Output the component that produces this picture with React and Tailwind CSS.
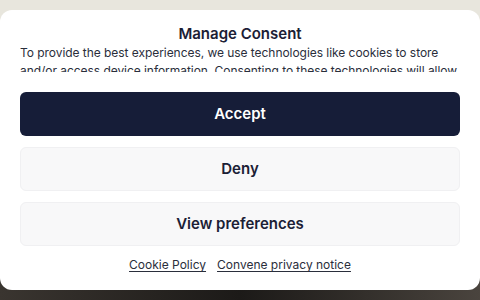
import React from 'react';

const App = () => {
  return (
    <div className="relative w-[480px] h-[300px] overflow-hidden" style={{ fontFamily: 'Inter, "Liberation Sans", sans-serif' }}>
      {/* page behind the dialog */}
      <div className="h-[150px] bg-[#e8e6dd]" />
      <div className="h-[150px] bg-gradient-to-r from-[#3a3530] via-[#1c1a18] to-[#4a443e]" />

      {/* Consent dialog */}
      <div className="absolute inset-x-0 top-[10px] h-[280px] bg-white rounded-xl flex flex-col items-center px-5 pt-[14px]">
        <h2 className="text-[15px] leading-5 font-semibold text-[#1b2035]">Manage Consent</h2>
        <div className="h-[28px] overflow-hidden w-full">
          <p className="text-[12px] leading-[18px] text-[#2a2e3b] tracking-[-0.05px]">
            To provide the best experiences, we use technologies like cookies to store and/or access device information. Consenting to these technologies will allow us to process data such as browsing behaviour or unique IDs on this site.
          </p>
        </div>

        <div className="w-full flex flex-col gap-[11px] mt-5">
          <button className="h-11 w-full rounded-md bg-[#161d38] text-white text-[15px] font-semibold">
            Accept
          </button>
          <button className="h-11 w-full rounded-md bg-[#f8f8f9] border border-[#f0f0f2] text-[#1b2035] text-[15px] font-semibold">
            Deny
          </button>
          <button className="h-11 w-full rounded-md bg-[#f8f8f9] border border-[#f0f0f2] text-[#1b2035] text-[15px] font-semibold">
            View preferences
          </button>
        </div>

        <div className="flex gap-[11px] mt-[9px] text-[12px] leading-5 text-[#2a2e3b]">
          <a className="underline underline-offset-2">Cookie Policy</a>
          <a className="underline underline-offset-2">Convene privacy notice</a>
        </div>
      </div>
    </div>
  );
};

export default App;
